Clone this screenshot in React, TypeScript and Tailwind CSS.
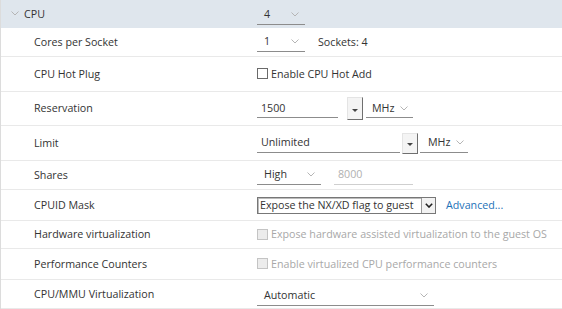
import { ReactNode } from "react";

const font = { fontFamily: '"Open Sans", "Liberation Sans", sans-serif' };

function Chevron({ className = "" }: { className?: string }) {
  return (
    <svg viewBox="0 0 8 5" className={`w-[8px] h-[5px] shrink-0 ${className}`} fill="none">
      <path d="M0.5 0.5 L4 4 L7.5 0.5" stroke="#b5b5b5" strokeWidth="1" />
    </svg>
  );
}

function Select({ value, width, pad = "pl-[7px] pr-[6px]" }: { value: string; width: string; pad?: string }) {
  return (
    <div className={`${width} h-[19px] border-b border-[#8c8c8c] flex items-center justify-between ${pad}`}>
      <span>{value}</span>
      <Chevron />
    </div>
  );
}

function SpinButton({ h = "h-[23px]" }: { h?: string }) {
  return (
    <div className={`w-[16px] ${h} bg-[#f4f4f4] border-t border-l border-[#e4e4e4] border-r border-b border-r-[#6f6f6f] border-b-[#6f6f6f] flex items-center justify-center`}>
      <div className="w-0 h-0 border-l-[3px] border-r-[3px] border-t-[3px] border-l-transparent border-r-transparent border-t-[#444] mt-[3px]" />
    </div>
  );
}

function Check({ disabled = false, label }: { disabled?: boolean; label: string }) {
  return (
    <div className={`flex items-center gap-[3px] ${disabled ? "text-[#a8a8a8]" : ""}`}>
      <div className={`w-[11px] h-[11px] border ${disabled ? "border-[#c4c4c4] bg-[#ececec]" : "border-[#6a6a6a] bg-white"}`} />
      <span>{label}</span>
    </div>
  );
}

function Row({ label, h, children }: { label: string; h: string; children: ReactNode }) {
  return (
    <div className={`flex items-center ${h} border-b border-[#e9e9e9]`}>
      <div className="w-[256px] pl-[33px] shrink-0">{label}</div>
      <div className="flex items-center">{children}</div>
    </div>
  );
}

export default function App() {
  return (
    <div className="w-[562px] h-[309px] bg-white border-l border-[#dcdcdc] text-[10.7px] text-[#333] overflow-hidden" style={font}>
      <div className="flex items-center h-[28px] bg-[#dfe6ed]">
        <div className="w-[256px] shrink-0 flex items-center pl-[10px] gap-[5px]">
          <Chevron />
          <span>CPU</span>
        </div>
        <div className="pt-[2px]">
          <Select value="4" width="w-[48px]" />
        </div>
      </div>

      <Row label="Cores per Socket" h="h-[29px]">
        <Select value="1" width="w-[48px]" />
        <span className="ml-[13px]">Sockets: 4</span>
      </Row>

      <Row label="CPU Hot Plug" h="h-[35px]">
        <Check label="Enable CPU Hot Add" />
      </Row>

      <Row label="Reservation" h="h-[34px]">
        <div className="w-[81px] h-[19px] border-b border-[#8c8c8c] pl-[4px] flex items-center">1500</div>
        <div className="ml-[9px]">
          <SpinButton />
        </div>
        <div className="ml-[3px]">
          <Select value="MHz" width="w-[47px]" pad="pl-[6px] pr-[5px]" />
        </div>
      </Row>

      <Row label="Limit" h="h-[35px]">
        <div className="w-[143px] h-[19px] border-b border-[#8c8c8c] pl-[4px] flex items-center">Unlimited</div>
        <div className="ml-[2px]">
          <SpinButton h="h-[21px]" />
        </div>
        <div className="ml-[2px]">
          <Select value="MHz" width="w-[48px]" pad="pl-[8px] pr-[4px]" />
        </div>
      </Row>

      <Row label="Shares" h="h-[29px]">
        <Select value="High" width="w-[64px]" />
        <div className="ml-[13px] w-[79px] h-[19px] border-b border-[#cfcfcf] pl-[4px] flex items-center text-[#b0b0b0]">8000</div>
      </Row>

      <Row label="CPUID Mask" h="h-[31px]">
        <div className="w-[179px] h-[17px] border border-[#777] shadow-[inset_1px_1px_0_#bbb] flex items-center justify-between pl-[2px]">
          <span>Expose the NX/XD flag to guest</span>
          <div className="w-[14px] h-[15px] border-l border-[#999] bg-[#f2f2f2] flex items-center justify-center">
            <svg viewBox="0 0 8 5" className="w-[8px] h-[5px]" fill="none">
              <path d="M0.8 0.8 L4 4 L7.2 0.8" stroke="#222" strokeWidth="1.6" />
            </svg>
          </div>
        </div>
        <span className="ml-[10px] text-[#1d72b8]">Advanced...</span>
      </Row>

      <Row label="Hardware virtualization" h="h-[28px]">
        <Check disabled label="Expose hardware assisted virtualization to the guest OS" />
      </Row>

      <Row label="Performance Counters" h="h-[31px]">
        <Check disabled label="Enable virtualized CPU performance counters" />
      </Row>

      <Row label="CPU/MMU Virtualization" h="h-[29px]">
        <div className="pt-[4px]">
          <Select value="Automatic" width="w-[177px]" />
        </div>
      </Row>
    </div>
  );
}
